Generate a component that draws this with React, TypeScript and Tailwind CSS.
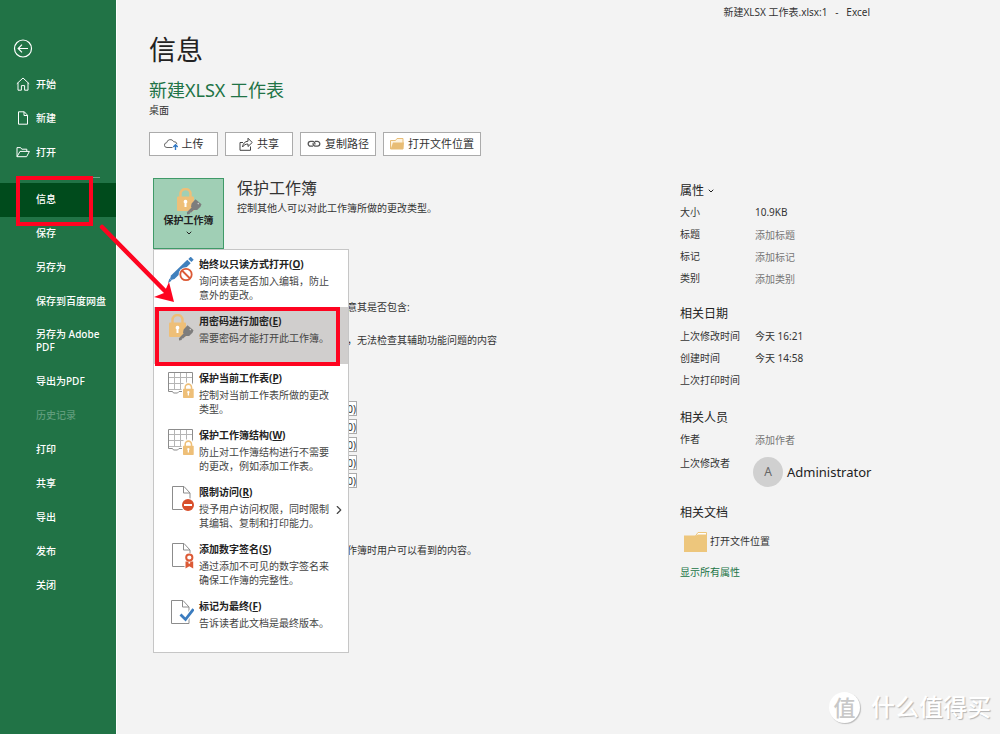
import type { ReactNode } from 'react'
import { ChevronDown, ChevronRight } from 'lucide-react'

type NavItem = {
  label: string
  icon?: ReactNode
  disabled?: boolean
}

const topNav: NavItem[] = [
  { label: '开始', icon: <HomeIcon /> },
  { label: '新建', icon: <FileIcon /> },
  { label: '打开', icon: <FolderOpenIcon /> },
]

const restNav: NavItem[] = [
  { label: '保存' },
  { label: '另存为' },
  { label: '保存到百度网盘' },
  { label: '另存为 Adobe PDF' },
  { label: '导出为PDF' },
  { label: '历史记录', disabled: true },
  { label: '打印' },
  { label: '共享' },
  { label: '导出' },
  { label: '发布' },
  { label: '关闭' },
]

const menuItems = [
  { title: '始终以只读方式打开', hotkey: 'O', text: '询问读者是否加入编辑，防止意外的更改。', icon: <ReadOnlyIcon /> },
  { title: '用密码进行加密', hotkey: 'E', text: '需要密码才能打开此工作簿。', icon: <LockKeyIcon />, active: true },
  { title: '保护当前工作表', hotkey: 'P', text: '控制对当前工作表所做的更改类型。', icon: <SheetLockIcon /> },
  { title: '保护工作簿结构', hotkey: 'W', text: '防止对工作簿结构进行不需要的更改，例如添加工作表。', icon: <SheetLockIcon /> },
  { title: '限制访问', hotkey: 'R', text: '授予用户访问权限，同时限制其编辑、复制和打印能力。', icon: <RestrictIcon />, submenu: true },
  { title: '添加数字签名', hotkey: 'S', text: '通过添加不可见的数字签名来确保工作簿的完整性。', icon: <SignatureIcon /> },
  { title: '标记为最终', hotkey: 'F', text: '告诉读者此文档是最终版本。', icon: <FinalIcon /> },
]

function HomeIcon() {
  return (
    <svg viewBox="0 0 14 14" className="w-[14px] h-[14px]" fill="none" stroke="currentColor">
      <path d="M0.8 6.8 7 1l6.2 5.8M2 5.8v7.4h3.4V8.6h3.2v4.6H12V5.8" />
    </svg>
  )
}

function FileIcon() {
  return (
    <svg viewBox="0 0 14 14" className="w-[14px] h-[14px]" fill="none" stroke="currentColor">
      <path d="M2.5.8h5.8l3.2 3.4v9H2.5zM8 .8v3.7h3.5" />
    </svg>
  )
}

function FolderOpenIcon() {
  return (
    <svg viewBox="0 0 14 14" className="w-[14px] h-[14px]" fill="none" stroke="currentColor">
      <path d="M1 11.7V2.6h3.6l1.2 1.6h5v2M1 11.7l3-5.3h9.4l-2.8 5.3z" />
    </svg>
  )
}

function Lock({ x = 0, y = 0, s = 1 }) {
  return (
    <g transform={`translate(${x} ${y}) scale(${s})`}>
      <path d="M3.5 9V6a5 5 0 0 1 10 0v3" fill="none" stroke="#eebf78" strokeWidth="2.4" />
      <rect x="0" y="8.5" width="17" height="14.5" rx="1" fill="#eebf78" />
      <path d="M8.5 11.8a1.9 1.9 0 0 1 1 3.5v3.7h-2v-3.7a1.9 1.9 0 0 1 1-3.5z" fill="#fff" />
    </g>
  )
}

function LockKeyIcon() {
  return (
    <svg viewBox="0 0 26 27" className="w-[26px] h-[27px]">
      <Lock x={1} y={0} />
      <g fill="#7d7d7d">
        <path d="m19.5 11.2 6 5-1 2.5-3.4 3.4-3.1-.1-3-3.2.6-3.3z" />
        <path d="m17.500 17.500 2.500 2.500-4.900 4.500-1.200.1-.2 1.500-2.600.4-.2-2.300z" />
      </g>
      <circle cx="22.300" cy="15.600" r=".8" fill="#d0cecd" />
    </svg>
  )
}

function ReadOnlyIcon() {
  return (
    <svg viewBox="0 0 26 27" className="w-[26px] h-[27px]">
      <g fill="#4080bd">
        <path d="m20.3 2 2.400-2.300 3 3.100-2.300 2.200z" />
        <path d="m19.300 2.800 3.400 3.400L6.500 22 3 23l-1-1 1-3.600z" />
        <path d="m1.400 21.500 2.200 2.200L0 26z" />
      </g>
      <circle cx="18" cy="17.500" r="7.300" fill="#fff" />
      <g fill="none" stroke="#dc5a36" strokeWidth="1.800">
        <circle cx="18" cy="17.500" r="5.700" />
        <path d="m14 13.500 8 8" />
      </g>
    </svg>
  )
}

function SheetLockIcon() {
  return (
    <svg viewBox="0 0 26 27" className="w-[26px] h-[27px]">
      <path
        d="M6.500 1.500v17M12.500 1.500v17M18.500 1.500v11M.5 6.500h24M.5 12.500h17M.5 18.500h13"
        fill="none"
        stroke="#b5b5b5"
      />
      <path d="M24.500 14V1.500H.5v19h4l1 1.500h4l1.500-1.500h3" fill="none" stroke="#8c8c8c" />
      <path d="M14 27V16l2-4.500h8l2 4.500v11z" fill="#fff" />
      <Lock x={15} y={12.5} s={0.63} />
    </svg>
  )
}

function PageShape() {
  return <path d="M4.500 1.500h11.500l6 6.500v16.500h-17.500zM15.500 1.500v6.500h6.500" fill="#fff" stroke="#8c8c8c" />
}

function RestrictIcon() {
  return (
    <svg viewBox="0 0 26 27" className="w-[26px] h-[27px]">
      <PageShape />
      <circle cx="20" cy="20" r="7" fill="#fff" />
      <circle cx="20" cy="20" r="6" fill="#d84f2b" />
      <path d="M16 20h8" stroke="#fff" strokeWidth="2" />
    </svg>
  )
}

function SignatureIcon() {
  return (
    <svg viewBox="0 0 26 27" className="w-[26px] h-[27px]">
      <PageShape />
      <path d="M16.500 11H26v16h-9.500z" fill="#fff" />
      <circle cx="21.300" cy="15.500" r="3.100" fill="none" stroke="#dc5a36" strokeWidth="2" />
      <path d="M17.500 19.500h7.700v7l-3.900-2.200-3.800 2.200z" fill="#dc5a36" />
      <circle cx="21.300" cy="20.700" r="1" fill="#fff" />
    </svg>
  )
}

function FinalIcon() {
  return (
    <svg viewBox="0 0 26 27" className="w-[26px] h-[27px]">
      <path d="M3.500 1.500h11.500l6 6.500v16.500h-17.500zM14.500 1.500v6.500h6.500" fill="#fff" stroke="#8c8c8c" />
      <path d="m12.500 15.500 5 5 8-10.500" fill="none" stroke="#fff" strokeWidth="5" />
      <path d="m12.500 15.500 5 5 8-10.500" fill="none" stroke="#3b7cbf" strokeWidth="2.800" />
    </svg>
  )
}

function CloudUploadIcon() {
  return (
    <svg viewBox="0 0 14 14" className="w-[14px] h-[14px]" fill="none">
      <path d="M8.500 10.500H3a2.400 2.400 0 0 1-.3-4.800 3.700 3.700 0 0 1 7-1 3 3 0 0 1 3.300 2.500" stroke="#666" />
      <path d="M11.500 13V8M9.300 10l2.200-2.300 2.200 2.300" stroke="#2f77c4" strokeWidth="1.400" />
    </svg>
  )
}

function ShareIcon() {
  return (
    <svg viewBox="0 0 14 14" className="w-[14px] h-[14px]" fill="none" stroke="#444">
      <path d="M4 5.500H1v7.800h10.500V9.500" />
      <path d="M3.500 10C4 6.500 6 4.300 9 4.200V1.200l4.200 4.300L9 9.500V7C6.500 7 5 8 3.500 10z" />
    </svg>
  )
}

function LinkIcon() {
  return (
    <svg viewBox="0 0 14 14" className="w-[14px] h-[14px]" fill="none" stroke="#555" strokeWidth="1.300">
      <path d="M6 9.200H3.600a2.400 2.400 0 0 1 0-4.800h2a2.400 2.400 0 0 1 2.200 3.200" />
      <path d="M8 4.400h2.400a2.400 2.400 0 0 1 0 4.800h-2a2.400 2.400 0 0 1-2.200-3.200" />
    </svg>
  )
}

function FolderYellowIcon() {
  return (
    <svg viewBox="0 0 14 14" className="w-[14px] h-[14px]">
      <path d="M.5 12V3.500h5L7 1.500h6V12" fill="#fdf3e0" stroke="#e8bd76" />
      <path d="M.5 12.500 3 5.500h11l-1 7z" fill="#e8bd76" />
    </svg>
  )
}

const commands = [
  { label: '上传', icon: <CloudUploadIcon />, width: 'w-[69px]' },
  { label: '共享', icon: <ShareIcon />, width: 'w-[68px]' },
  { label: '复制路径', icon: <LinkIcon />, width: 'w-[76px]' },
  { label: '打开文件位置', icon: <FolderYellowIcon />, width: 'w-[98px]' },
]

function NavLink({ label, icon, disabled }: NavItem) {
  return (
    <a
      href="#"
      className={`flex min-h-[34px] items-center pl-4 pr-2 py-[10px] leading-[13px] ${disabled ? 'text-[#5f9c7b]' : 'text-white'}`}
    >
      <span className="w-5 shrink-0">{icon}</span>
      <span className={label.includes('Adobe') ? '' : 'whitespace-nowrap'}>{label}</span>
    </a>
  )
}

function Sidebar() {
  return (
    <nav className="w-[117px] shrink-0 border-r border-white bg-[#217346] text-[10px] font-medium">
      <button className="ml-[13px] mt-[38px] mb-[9px] block text-white" aria-label="返回">
        <svg viewBox="0 0 20 20" className="w-5 h-5" fill="none" stroke="currentColor" strokeWidth="1.200">
          <circle cx="10" cy="10.500" r="8.500" />
          <path d="M15 10.500H5.500M9 6.700 5.200 10.500 9 14.300" />
        </svg>
      </button>
      {topNav.map((item) => (
        <NavLink key={item.label} {...item} />
      ))}
      <hr className="mx-4 mt-2 mb-[5px] border-[#6fa588]" />
      <a href="#" className="relative flex h-[34px] items-center bg-[#004b1c] pb-[2px] pl-9 text-white">
        信息
        <span className="absolute left-4 -top-[7px] h-[50px] w-[77px] border-4 border-[#fe0420]" />
      </a>
      <div className="-mt-px">
        {restNav.map((item) => (
          <NavLink key={item.label} {...item} />
        ))}
      </div>
    </nav>
  )
}

function ProtectMenu() {
  return (
    <div className="absolute left-0 top-full z-10 h-[404px] w-[196px] border border-[#c6c6c6] bg-white">
      {menuItems.map((item) => (
        <button
          key={item.title}
          className={`relative flex h-[57px] w-full items-start pl-[14px] pt-[6px] text-left ${item.active ? 'bg-[#d0cecd]' : ''}`}
        >
          <span className="mr-[5px] mt-px shrink-0">{item.icon}</span>
          <span className="flex-1">
            <span className="block whitespace-nowrap font-bold leading-4 text-[#222]">
              {item.title}(<u>{item.hotkey}</u>)
            </span>
            <span className="mt-[2px] block leading-[14px] text-[#444]">{item.text}</span>
          </span>
          <span className="w-4 self-center">
            {item.submenu && <ChevronRight className="h-[14px] w-[14px] text-[#444]" strokeWidth={2} />}
          </span>
          {item.active && <span className="absolute left-px right-2 top-0 h-[59px] border-4 border-[#fe0420]" />}
        </button>
      ))}
    </div>
  )
}

function InspectSection() {
  return (
    <div className="ml-[194px] mt-[50px] leading-4">
      <p>意其是否包含:</p>
      <p className="mt-[17px]">，无法检查其辅助功能问题的内容</p>
      <ul className="mt-[53px] flex flex-col gap-[3px]">
        {[1, 2, 3, 4, 5].map((n) => (
          <li key={n} className="flex h-[15px] w-[10px] items-center justify-end border border-[#ababab] bg-white">
            0)
          </li>
        ))}
      </ul>
      <p className="mt-[54px]">作簿时用户可以看到的内容。</p>
    </div>
  )
}

function Row({ label, children }: { label: string; children?: ReactNode }) {
  return (
    <div className="flex h-[22px] items-center">
      <span className="w-[75px]">{label}</span>
      {children}
    </div>
  )
}

function FieldRow({ label, hint }: { label: string; hint: string }) {
  return (
    <label className="flex h-[22px] items-center">
      <span className="w-[75px]">{label}</span>
      <input className="mt-px h-4 w-24 bg-transparent placeholder:text-[#767676]" placeholder={hint} />
    </label>
  )
}

function Heading({ children }: { children: ReactNode }) {
  return <h3 className="flex h-5 items-center text-[12px] text-[#222]">{children}</h3>
}

function Properties() {
  return (
    <aside className="w-[320px] shrink-0 pt-[3px]">
      <Heading>
        属性
        <ChevronDown className="ml-[3px] h-2 w-2" strokeWidth={3} />
      </Heading>
      <Row label="大小">
        <span className="mt-px">10.9KB</span>
      </Row>
      <FieldRow label="标题" hint="添加标题" />
      <FieldRow label="标记" hint="添加标记" />
      <FieldRow label="类别" hint="添加类别" />

      <div className="mt-[15px]">
        <Heading>相关日期</Heading>
        <div className="mt-px">
          <Row label="上次修改时间">今天 16:21</Row>
          <Row label="创建时间">今天 14:58</Row>
          <Row label="上次打印时间" />
        </div>
      </div>

      <div className="mt-[17px]">
        <Heading>相关人员</Heading>
        <FieldRow label="作者" hint="添加作者" />
        <div className="mt-[2px] flex items-start">
          <span className="w-[73px] leading-[22px]">上次修改者</span>
          <span className="mt-[5px] flex h-[30px] w-[30px] items-center justify-center rounded-full bg-[#d0d0d0] text-[12px] text-[#666]">
            A
          </span>
          <span className="ml-1 mt-[5px] text-[13px] leading-[30px] text-[#222]">Administrator</span>
        </div>
      </div>

      <div className="mt-4">
        <Heading>相关文档</Heading>
        <button className="ml-1 mt-2 flex items-center gap-[3px]">
          <svg viewBox="0 0 23 22" className="h-[22px] w-[23px]">
            <path d="M11.500 5 14 1.500h8.500V5" fill="#fff" stroke="#edc67c" />
            <path d="M0 4.500h12l2-1h9V21H0z" fill="#edc67c" />
          </svg>
          <span className="pb-[2px]">打开文件位置</span>
        </button>
      </div>
      <a href="#" className="mt-[9px] block w-fit leading-5 text-[#217346]">
        显示所有属性
      </a>
    </aside>
  )
}

function Watermark() {
  return (
    <div className="absolute bottom-[9px] right-[9px] flex items-center gap-[11px] font-medium text-white">
      <span className="flex h-[31px] w-[31px] items-center justify-center rounded-full bg-white text-[22px] leading-[31px] text-[#c8c8c8] shadow-[1px_1px_1px_#bbb]">
        值
      </span>
      <span className="text-[24px] leading-9 [text-shadow:1px_1px_1px_#b5b5b5]">什么值得买</span>
    </div>
  )
}

export default function App() {
  return (
    <div className="relative flex min-h-screen bg-[#f3f3f3] font-['Noto_Sans','Noto_Sans_CJK_SC',sans-serif] text-[10px] text-[#333]">
      <Sidebar />
      <main className="min-w-0 flex-1 pl-8">
        <header>
          <div className="flex h-6 items-center justify-end pr-[130px] whitespace-pre">
            {'新建XLSX 工作表.xlsx:1   -   Excel'}
          </div>
          <h1 className="mt-2 text-[27px] leading-9 text-[#222]">信息</h1>
          <h2 className="mt-[10px] text-[18px] leading-6 text-[#217346]">新建XLSX 工作表</h2>
          <p className="leading-4">桌面</p>
          <div className="mt-[14px] flex gap-[7px]">
            {commands.map((c) => (
              <button
                key={c.label}
                className={`flex h-6 items-center justify-center gap-1 whitespace-nowrap border border-[#ababab] bg-white text-[11px] ${c.width}`}
              >
                {c.icon}
                {c.label}
              </button>
            ))}
          </div>
        </header>

        <div className="mt-[22px] flex">
          <section className="min-w-0 flex-1 pl-1">
            <div className="relative flex">
              <button className="flex h-[71px] w-[71px] shrink-0 flex-col items-center border border-[#3f9a68] bg-[#a0cfb5] pt-[9px] font-bold text-[#222]">
                <LockKeyIcon />
                <span className="-mt-[3px] leading-4">保护工作簿</span>
                <ChevronDown className="mt-px h-2 w-2" strokeWidth={3} />
              </button>
              <div className="ml-[13px]">
                <h2 className="text-[16px] leading-5 text-[#333]">保护工作簿</h2>
                <p className="mt-[2px] leading-4">控制其他人可以对此工作簿所做的更改类型。</p>
              </div>
              <ProtectMenu />
            </div>
            <InspectSection />
          </section>
          <Properties />
        </div>
      </main>

      <svg className="pointer-events-none absolute left-[98px] top-[222px] z-20 h-[82px] w-[80px]" viewBox="0 0 80 82">
        <path d="M4 5 67 69" stroke="#fe0420" strokeWidth="4.500" strokeLinecap="round" />
        <path d="m76 80-20-5 10-4 5-11z" fill="#fe0420" />
      </svg>
      <Watermark />
    </div>
  )
}
